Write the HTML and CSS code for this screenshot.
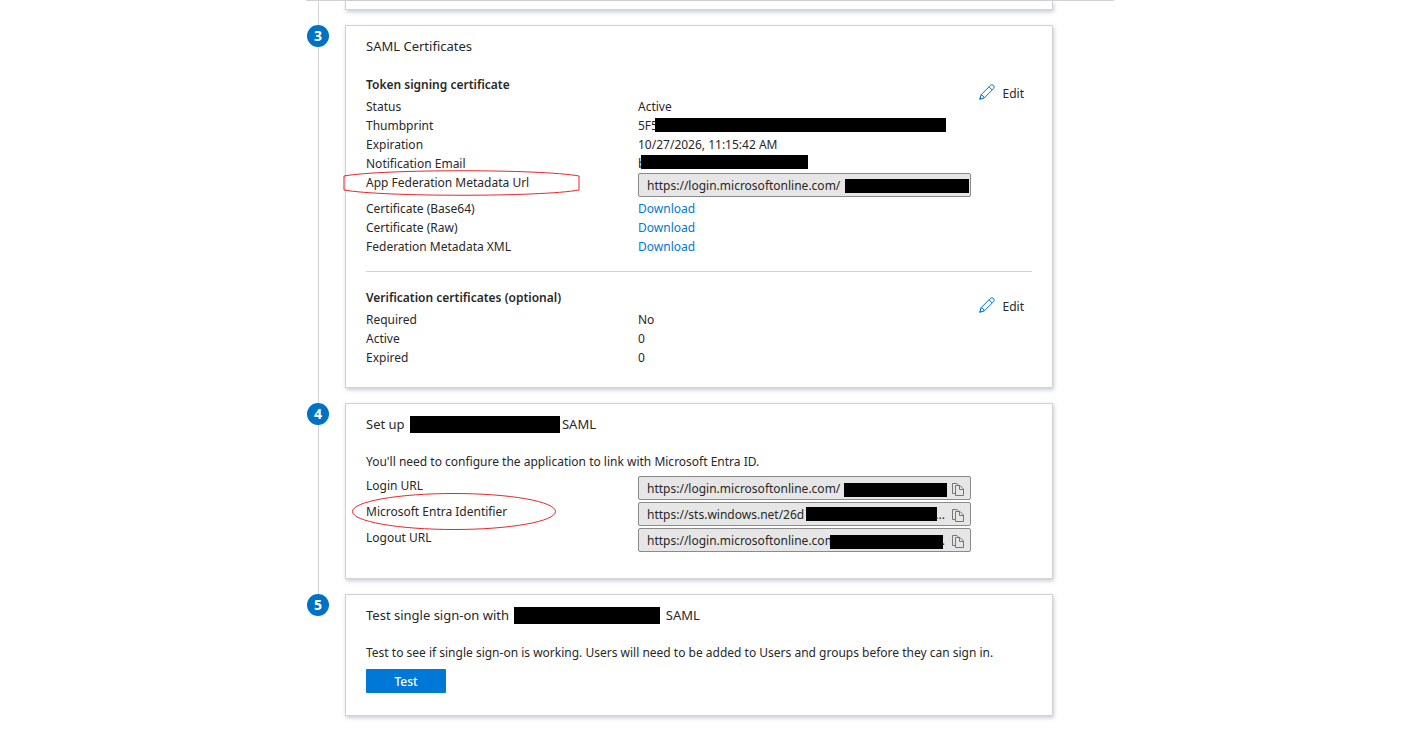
FILE: index.html
```html
<!DOCTYPE html>
<html lang="en">
<head>
    <meta charset="UTF-8">
    <meta name="viewport" content="width=device-width, initial-scale=1.0">
    <title>SAML-based Sign-on</title>
    <link rel="stylesheet" href="styles.css">
</head>
<body>

    <!-- Shared icons -->
    <svg class="sprite" aria-hidden="true">
        <symbol id="icon-pencil" viewBox="0 0 16 16">
            <path d="M0.7 15.3 L2 10.8 L11.4 1.4 Q12.800 0 14.500 1.4 Q16 3.200 14.600 4.600 L5.200 14 Z M2 10.8 Q4.600 11.400 5.200 14 M10 2.800 L13.200 6" fill="none" stroke="currentColor" stroke-linejoin="round"/>
            <path d="M0.5 15.500 L1.300 13 L3 14.700 Z" fill="currentColor"/>
        </symbol>
        <symbol id="icon-copy" viewBox="0 0 12 13">
            <path d="M3.5 10.5 H0.5 V0.5 H5 L6.5 2 M3.5 2.5 H8 L11.5 6 V12.5 H3.5 Z M7.5 2.5 V6.5 H11.5" fill="none" stroke="currentColor"/>
        </symbol>
    </svg>

    <main class="page">
        <section class="step">
            <div class="marker"></div>
            <div class="card card-previous"></div>
        </section>

        <section class="step">
            <div class="marker"><span class="badge">3</span></div>
            <div class="card">
                <h2>SAML Certificates</h2>

                <div class="group">
                    <h3>Token signing certificate</h3>
                    <button class="edit" type="button"><svg><use href="#icon-pencil"/></svg>Edit</button>
                    <dl class="rows">
                        <dt>Status</dt>
                        <dd>Active</dd>
                        <dt>Thumbprint</dt>
                        <dd>5F5<span class="redacted redacted-thumbprint"></span></dd>
                        <dt>Expiration</dt>
                        <dd>10/27/2026, 11:15:42 AM</dd>
                        <dt>Notification Email</dt>
                        <dd>b<span class="redacted redacted-email"></span></dd>
                        <dt>
                            <label for="metadata-url">App Federation Metadata Url</label>
                            <svg class="ring ring-metadata" viewBox="0 0 238 27"><path d="M1 6 C40 -1 198 -1 236 6 V20 C198 27 40 27 1 20 Z"/></svg>
                        </dt>
                        <dd class="field">
                            <input id="metadata-url" type="text" value="https://login.microsoftonline.com/" readonly>
                            <span class="redacted redacted-metadata"></span>
                        </dd>
                        <dt>Certificate (Base64)</dt>
                        <dd><a href="#">Download</a></dd>
                        <dt>Certificate (Raw)</dt>
                        <dd><a href="#">Download</a></dd>
                        <dt>Federation Metadata XML</dt>
                        <dd><a href="#">Download</a></dd>
                    </dl>
                </div>

                <hr>

                <div class="group">
                    <h3>Verification certificates (optional)</h3>
                    <button class="edit" type="button"><svg><use href="#icon-pencil"/></svg>Edit</button>
                    <dl class="rows">
                        <dt>Required</dt>
                        <dd>No</dd>
                        <dt>Active</dt>
                        <dd>0</dd>
                        <dt>Expired</dt>
                        <dd>0</dd>
                    </dl>
                </div>
            </div>
        </section>

        <section class="step">
            <div class="marker"><span class="badge">4</span></div>
            <div class="card card-setup">
                <h2>Set up <span class="app-name"></span>SAML</h2>
                <p>You'll need to configure the application to link with Microsoft Entra ID.</p>
                <dl class="rows">
                    <dt><label for="login-url">Login URL</label></dt>
                    <dd class="field">
                        <input id="login-url" type="text" value="https://login.microsoftonline.com/" readonly>
                        <span class="redacted redacted-login"></span>
                        <button class="copy" type="button" aria-label="Copy"><svg><use href="#icon-copy"/></svg></button>
                    </dd>
                    <dt>
                        <label for="entra-id">Microsoft Entra Identifier</label>
                        <svg class="ring ring-entra" viewBox="0 0 204 37"><ellipse cx="102" cy="18.5" rx="101.5" ry="18"/></svg>
                    </dt>
                    <dd class="field">
                        <input id="entra-id" type="text" value="https://sts.windows.net/26d" readonly>
                        <span class="redacted redacted-entra"></span>
                        <span class="more">...</span>
                        <button class="copy" type="button" aria-label="Copy"><svg><use href="#icon-copy"/></svg></button>
                    </dd>
                    <dt><label for="logout-url">Logout URL</label></dt>
                    <dd class="field">
                        <input id="logout-url" type="text" value="https://login.microsoftonline.com" readonly>
                        <span class="redacted redacted-logout"></span>
                        <span class="more">.</span>
                        <button class="copy" type="button" aria-label="Copy"><svg><use href="#icon-copy"/></svg></button>
                    </dd>
                </dl>
            </div>
        </section>

        <section class="step">
            <div class="marker"><span class="badge">5</span></div>
            <div class="card card-test">
                <h2>Test single sign-on with <span class="app-name"></span> SAML</h2>
                <p>Test to see if single sign-on is working. Users will need to be added to Users and groups before they can sign in.</p>
                <button class="primary" type="button">Test</button>
            </div>
        </section>
    </main>

</body>
</html>
```
FILE: styles.css
```css
* {
    box-sizing: border-box;
}

body {
    margin: 0;
    padding-left: 4px;
    background-color: white;
    color: #292827;
    font-family: "Segoe UI", "Noto Sans", sans-serif;
    font-size: 12px;
    line-height: 19px;
}

button,
input {
    font: inherit;
    color: inherit;
}

.sprite {
    display: none;
}

.page {
    max-width: 808px;
    margin: 0 auto;
    border-top: 1px solid #d2d2d2;
}

/* Steps */
.step {
    display: flex;
    gap: 15px;
    padding-right: 61px;
}

.marker {
    display: flex;
    flex-direction: column;
    align-items: center;
    width: 24px;
}

.marker::after {
    content: "";
    flex: 1;
    width: 1px;
    background-color: #d2d2d2;
}

.step:last-child .marker::after {
    display: none;
}

.badge {
    width: 22px;
    height: 22px;
    border-radius: 50%;
    background-color: #0072c6;
    color: white;
    font-size: 14px;
    font-weight: 700;
    line-height: 22px;
    text-align: center;
}

.card {
    flex: 1;
    min-width: 0;
    margin-bottom: 15px;
    padding: 10px 20px 20px;
    border: 1px solid #d2d2d2;
    background-color: white;
    box-shadow: 1px 2px 4px rgba(70, 85, 120, 0.3);
}

.card-previous {
    padding: 4px 20px;
    border-top: none;
}

.card-setup {
    padding-bottom: 24px;
}

.card-test {
    padding-bottom: 22px;
}

h2 {
    margin: 0 0 18px;
    font-size: 13px;
    font-weight: 400;
    line-height: 20px;
}

h3 {
    margin: 0 0 3px;
    font-size: 12px;
    font-weight: 600;
}

p {
    margin: 0 0 5px;
}

hr {
    margin: 15px 0;
    border: none;
    border-top: 1px solid #d2d2d2;
}

a {
    color: #0078d4;
    text-decoration: none;
}

a:hover {
    text-decoration: underline;
}

/* Label and value rows */
.group {
    position: relative;
    padding-top: 1px;
}

.rows {
    display: grid;
    grid-template-columns: 272px 1fr;
    margin: 0;
}

.rows dt,
.rows dd {
    position: relative;
    margin: 0;
}

.rows .field {
    width: 333px;
    max-width: 100%;
    height: 24px;
    margin-bottom: 2px;
}

.field input {
    display: block;
    width: 100%;
    height: 24px;
    padding: 0 8px;
    border: 1px solid #8a8a8a;
    border-radius: 2px;
    background-color: #e6e6e6;
    text-overflow: ellipsis;
}

.edit {
    position: absolute;
    top: 10px;
    right: 8px;
    display: flex;
    align-items: flex-start;
    gap: 8px;
    padding: 0;
    border: none;
    background: none;
    cursor: pointer;
}

.edit svg {
    width: 16px;
    height: 16px;
    color: #0078d4;
}

.copy {
    position: absolute;
    top: 7px;
    right: 7px;
    padding: 0;
    border: none;
    background: none;
    color: #767676;
    cursor: pointer;
}

.copy svg {
    display: block;
    width: 12px;
    height: 13px;
}

.more {
    position: absolute;
    top: 3px;
    right: 26px;
}

.primary {
    display: block;
    width: 80px;
    height: 24px;
    margin-top: 7px;
    padding: 0;
    border: none;
    border-radius: 1px;
    background-color: #0078d7;
    color: white;
    font-weight: 500;
    cursor: pointer;
}

.primary:hover {
    background-color: #106ebe;
}

/* Blacked out values */
.app-name {
    display: inline-block;
    width: 150px;
    height: 17px;
    margin: 0 2px;
    background-color: black;
    vertical-align: -4px;
}

.card-test .app-name {
    width: 146px;
}

.redacted {
    position: absolute;
    height: 14px;
    background-color: black;
}

.redacted-thumbprint {
    top: 2px;
    left: 17px;
    width: 291px;
}

.redacted-email {
    top: 1px;
    left: 3px;
    width: 167px;
}

.redacted-metadata {
    top: 6px;
    left: 207px;
    width: 124px;
}

.redacted-login {
    top: 7px;
    left: 206px;
    width: 103px;
}

.redacted-entra {
    top: 5px;
    left: 168px;
    width: 131px;
}

.redacted-logout {
    top: 7px;
    left: 192px;
    width: 113px;
}

/* Red rings around the highlighted labels */
.ring {
    position: absolute;
    overflow: visible;
    fill: none;
    stroke: #e8262d;
    pointer-events: none;
}

.ring-metadata {
    top: -3px;
    left: -23px;
    width: 238px;
    height: 27px;
}

.ring-entra {
    top: -9px;
    left: -14px;
    width: 204px;
    height: 37px;
}
```
